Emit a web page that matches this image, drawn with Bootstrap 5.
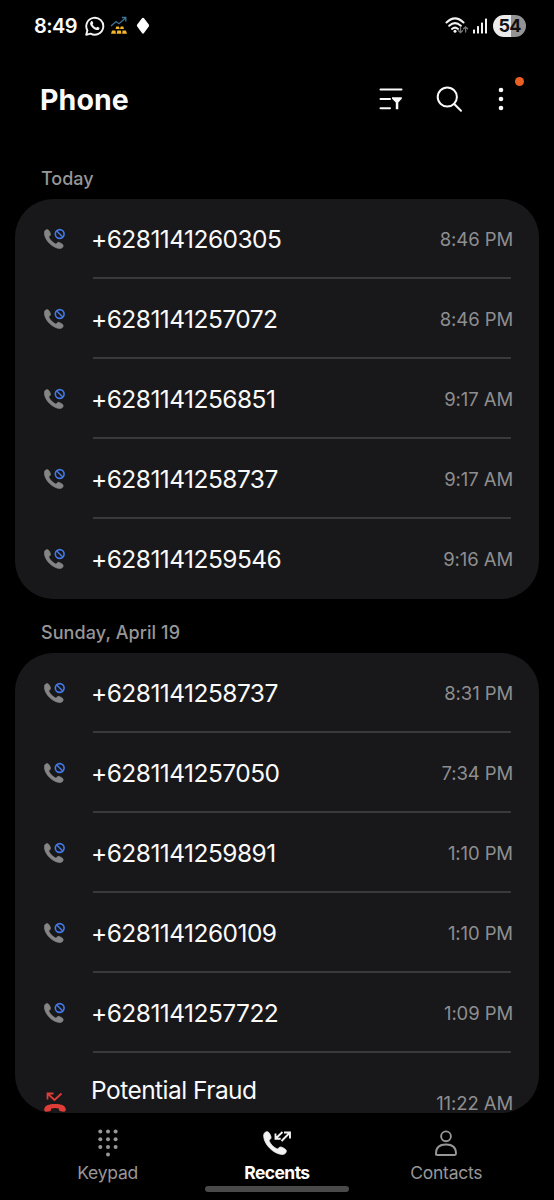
<!DOCTYPE html>
<html lang="en">
<head>
<meta charset="utf-8">
<meta name="viewport" content="width=device-width, initial-scale=1">
<title>Phone</title>
<link href="https://cdn.jsdelivr.net/npm/bootstrap@5.3.0/dist/css/bootstrap.min.css" rel="stylesheet">
<style>
body{background:#000;color:#fafafa;font-family:Inter,"Liberation Sans",sans-serif;height:1200px;overflow:hidden;line-height:1}
svg{display:block;flex:none}
.status{height:52px;padding:0 28px 0 34px}
.clock{font-size:20px;font-weight:600;letter-spacing:-.6px;width:51px;white-space:nowrap}
.battery{width:33px;height:22px;border-radius:11px;background:linear-gradient(90deg,#ececec 54%,#949494 54%);color:#111;font-size:18px;font-weight:700;letter-spacing:-.8px}
.topbar{height:96px;padding:0 30px 0 40px}
.title{font-size:28.5px;font-weight:700;letter-spacing:.1px;padding-top:1px}
.dot{width:9px;height:9px;background:#ea6022;left:515px;top:77px}
.daylabel{font-size:18px;font-weight:500;color:#979797;padding-left:41px}
.calls{margin:0 15px;background:#18181a;border-radius:38px;overflow:hidden}
.entry{height:80px;padding-left:28px;padding-right:26px;position:relative}
.entry .num{margin-left:24px;padding-top:1px;font-size:24.5px;font-weight:400;letter-spacing:-.53px;white-space:nowrap}
.entry .when{font-size:18.5px;font-weight:400;letter-spacing:-.1px;color:#8e8e90;padding-top:1px;white-space:nowrap}
.entry:not(:last-child)::after{content:"";position:absolute;left:78px;right:28px;bottom:0;height:2px;background:#39393b}
.clipped{height:460px}
.tabs{height:87px;padding:15px 23px 0}
.tab{width:169.3px;font-size:17.5px;letter-spacing:-.25px;color:#979797}
.tab.on{color:#fff;font-weight:700;letter-spacing:-.6px}
.tabtext{margin-top:6px}
.handle{width:144px;height:6px;border-radius:3px;background:#4a4a4a;left:205px;top:1186px}
</style>
</head>
<body class="position-relative">
<svg width="0" height="0" class="position-absolute">
  <symbol id="handset" viewBox="0 0 20 20"><path d="M.6 4.600C.4 2.400 1.400.8 3 .6 4.600.4 5.400 1.800 6.200 3.600 7 5.400 6.800 6.200 5.700 7.100 5 7.800 5 8.200 5.500 9.100 6.800 11.400 8.500 13.200 11 14.600c.8.500 1.400.4 1.900-.2.8-1.100 1.800-1.400 3.600-.5 2.100 1 3.200 1.900 2.900 3.200-.3 1.700-1.800 2.500-3.800 2.400C8.700 18.900 1.200 11.600.6 4.600Z" fill="currentColor" stroke="currentColor" stroke-width=".7"/></symbol>
</svg>

<header class="status d-flex align-items-center">
  <span class="clock">8:49</span>
  <svg width="20" height="20" viewBox="0 0 20 20" fill="none" stroke="#f4f4f4"><path d="M1.200 18.800 2.400 14.400A8.500 8.500 0 1 1 5.600 17.600Z" stroke-width="1.900" stroke-linejoin="round"/><path d="M6.100 5.200c.7-.6 1.300-.3 1.600.5l.6 1.400c.1.400-.7 1.200-.6 1.500.7 1.500 1.800 2.500 3.400 3.100.4.100 1-1.200 1.400-1l1.900 1c.5.300-.2 1.900-.9 2.200-2.800 1.300-8.900-3.600-8.400-7Z" fill="#f4f4f4" stroke="none"/></svg>
  <svg width="18" height="20" viewBox="0 0 18 20" style="margin-left:5px"><path d="m1 10 5-4.500 3 2.200L15.500 2M11.800 1.500h4v4" fill="none" stroke="#3c7396" stroke-width="1.300"/><path d="m5.500 13 .7-2.400H9l.6 2.400Zm4.600 0 .5-2.400h2.700l.7 2.400ZM1 17.800l1-3.300h3.400l.5 3.300Zm5.700 0 .6-3.300h3.600l.5 3.300Zm5.500 0 .3-3.300h3.400l1.100 3.300Z" fill="#f3b52b"/></svg>
  <svg width="14" height="18" viewBox="0 0 14 18" style="margin-left:8px"><path d="M7 .8q.7 0 1.200.8l4.600 6q.7 1 0 2l-4.600 6.200Q7 17.500 5.800 15.800L1.200 9.600q-.7-1 0-2l4.600-6Q6.300.8 7 .8Z" fill="#fff"/></svg>
  <svg class="ms-auto" width="24" height="20" viewBox="0 0 24 20" fill="none" stroke="#f4f4f4" stroke-width="2" stroke-linecap="round"><path d="M1.500 6.500Q10-1.800 18.500 6.500M4.200 9.800q5.800-5.300 11.600 0M7 12.900q3-2.600 6 0"/><circle cx="10" cy="15.200" r="1.500" fill="#f4f4f4" stroke="none"/><path d="M15.500 11.500v5m-2-1.800 2 2 2-2M20.600 16v-5m-2 1.800 2-2 2 2" stroke="#777" stroke-width="1.300"/></svg>
  <svg width="15" height="16" viewBox="0 0 15 16" style="margin:0 5px 0 4px" fill="#f4f4f4"><rect x="0" y="11.500" width="2" height="4" rx=".6"/><rect x="4" y="8" width="2" height="7.500" rx=".6"/><rect x="8" y="4.500" width="2" height="11" rx=".6"/><rect x="12" y=".5" width="2" height="15" rx=".6"/></svg>
  <span class="battery d-flex align-items-center justify-content-center">54</span>
</header>

<div class="topbar d-flex align-items-center">
  <h1 class="title m-0 me-auto">Phone</h1>
  <svg width="24" height="24" viewBox="0 0 24 24" fill="none" stroke="#fafafa" stroke-width="2" stroke-linecap="round" style="margin-top:-2px"><path d="M1.500 2.500h21M1.500 12h9.500M1.500 21.300h9.500"/><path d="M13 10.300h9.800v1.400l-3.500 3.700v6.800h-2.500v-6.800L13 11.700Z" fill="#fafafa" stroke="none"/></svg>
  <svg width="28" height="28" viewBox="0 0 28 28" fill="none" stroke="#fafafa" stroke-width="2" stroke-linecap="round" style="margin:-2px 0 0 32px"><circle cx="12.300" cy="12" r="9.600"/><path d="m19.200 19 6.800 6.800"/></svg>
  <svg width="10" height="26" viewBox="0 0 10 26" fill="#fafafa" style="margin:-2px 18px 0 33px"><circle cx="5" cy="4" r="2.300"/><circle cx="5" cy="13" r="2.300"/><circle cx="5" cy="22" r="2.300"/></svg>
</div>
<span class="dot position-absolute rounded-circle"></span>

<main>
  <div class="daylabel d-flex align-items-center" style="height:51px;padding-top:11px">Today</div>
  <section class="calls" id="today"></section>
  <div class="daylabel d-flex align-items-center" style="height:54px;padding-top:13px;letter-spacing:.08px">Sunday, April 19</div>
  <section class="calls clipped" id="sunday"></section>
</main>

<nav class="tabs d-flex">
  <div class="tab d-flex flex-column align-items-center">
    <svg width="24" height="30" viewBox="0 0 24 30" fill="#979797"><circle cx="4.300" cy="3.500" r="2"/><circle cx="12" cy="3.500" r="2"/><circle cx="19.600" cy="3.500" r="2"/><circle cx="4.300" cy="11.200" r="2"/><circle cx="12" cy="11.200" r="2"/><circle cx="19.600" cy="11.200" r="2"/><circle cx="4.300" cy="19" r="2"/><circle cx="12" cy="19" r="2"/><circle cx="19.600" cy="19" r="2"/><circle cx="12" cy="26.500" r="2"/></svg>
    <span class="tabtext">Keypad</span>
  </div>
  <div class="tab on d-flex flex-column align-items-center">
    <svg width="30" height="30" viewBox="0 0 30 30"><use href="#handset" x="1" y="3" width="24" height="24" color="#f2f2f2"/><path d="m20.500 4-7 6.700m0-5.200v5.200h5.200M19.500 13l8.500-8.500m-6 0h6v6" fill="none" stroke="#f2f2f2" stroke-width="1.900"/></svg>
    <span class="tabtext">Recents</span>
  </div>
  <div class="tab d-flex flex-column align-items-center">
    <svg width="24" height="30" viewBox="0 0 24 30" fill="none" stroke="#979797" stroke-width="1.900" stroke-linejoin="round"><circle cx="12" cy="8.300" r="4.900"/><path d="M2 26.700v-1.200C2 19.500 6 16.500 12 16.500s10 3 10 9q0 1.500-1.300 1.500H3.300Q2 27 2 25.500Z"/></svg>
    <span class="tabtext">Contacts</span>
  </div>
</nav>
<div class="handle position-absolute"></div>

<script src="https://cdn.jsdelivr.net/npm/bootstrap@5.3.0/dist/js/bootstrap.bundle.min.js"></script>
<script>
const blocked = `<svg width="24" height="24" viewBox="0 0 24 24"><use href="#handset" x=".8" y="2" width="20" height="20" color="#858585"/><circle cx="16.700" cy="7" r="5.700" fill="#18181a"/><circle cx="16.700" cy="7" r="4.400" fill="none" stroke="#4379e8" stroke-width="1.600"/><path d="m13.700 4 6 6" stroke="#4379e8" stroke-width="1.500"/></svg>`;
const missed = `<svg width="24" height="24" viewBox="0 0 24 24"><path d="M4.500 9.500V3.500h6M5 4l6.500 6L18.500 3.500" fill="none" stroke="#df3d38" stroke-width="1.800"/><path d="M1.200 20C1 15.500 6 14 12 14s11 1.500 10.800 6q-.2 1.800-2 1.700l-3.300-.4q-1.500-.2-1.600-1.600l-.1-1.200q-3.800-1-7.600 0l-.1 1.200q-.1 1.400-1.600 1.600l-3.300.4q-1.800.1-2-1.700Z" fill="#df3d38"/></svg>`;
const row = (n, t) => `<div class="entry d-flex align-items-center">${blocked}<span class="num me-auto">${n}</span><span class="when">${t}</span></div>`;
today.innerHTML = [["+6281141260305","8:46 PM"],["+6281141257072","8:46 PM"],["+6281141256851","9:17 AM"],["+6281141258737","9:17 AM"],["+6281141259546","9:16 AM"]].map(r => row(...r)).join("");
sunday.innerHTML = [["+6281141258737","8:31 PM"],["+6281141257050","7:34 PM"],["+6281141259891","1:10 PM"],["+6281141260109","1:10 PM"],["+6281141257722","1:09 PM"]].map(r => row(...r)).join("") +
  `<div class="entry d-flex align-items-start"><span style="padding-top:37px">${missed}</span><span class="num me-auto" style="padding-top:25px">Potential Fraud</span><span class="when" style="padding-top:41px">11:22 AM</span></div>`;
</script>
</body>
</html>
